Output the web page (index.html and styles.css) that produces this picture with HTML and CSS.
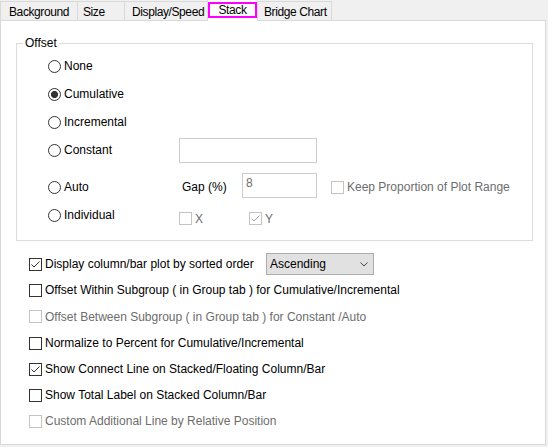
FILE: index.html
```html
<!DOCTYPE html>
<html>
<head>
<meta charset="utf-8">
<link rel="stylesheet" href="styles.css">
</head>
<body>
<div class="tabs">
  <div class="tab t-bg">Background</div>
  <div class="tab t-size">Size</div>
  <div class="tab t-disp">Display/Speed</div>
  <div class="tab active"><span class="hl">Stack</span></div>
  <div class="tab t-bridge">Bridge Chart</div>
</div>
<div class="panel">
  <div class="group">
    <span class="legend">Offset</span>
    <div class="row"><label class="opt"><span class="radio"></span>None</label></div>
    <div class="row"><label class="opt"><span class="radio on"></span>Cumulative</label></div>
    <div class="row"><label class="opt"><span class="radio"></span>Incremental</label></div>
    <div class="row"><label class="opt"><span class="radio"></span>Constant</label><div class="textbox wide"></div></div>
    <div class="row spaced">
      <label class="opt"><span class="radio"></span>Auto</label>
      <span class="gaplbl">Gap (%)</span>
      <div class="textbox narrow">8</div>
      <label class="copt keep"><span class="cb dis"></span><span class="dtext">Keep Proportion of Plot Range</span></label>
    </div>
    <div class="row">
      <label class="opt"><span class="radio"></span>Individual</label>
      <label class="copt axis axx"><span class="cb dis"></span><span class="dtext">X</span></label>
      <label class="copt axis"><span class="cb dis"><svg width="11" height="11" viewBox="0 0 11 11"><polyline points="1.5,5.5 4,8 9.5,2.5" fill="none" stroke="#a8a8a8" stroke-width="1"/></svg></span><span class="dtext">Y</span></label>
    </div>
  </div>
  <div class="checks">
    <div class="crow">
      <span class="cb"><svg width="11" height="11" viewBox="0 0 11 11"><polyline points="1.5,5.5 4,8 9.5,2.5" fill="none" stroke="#333" stroke-width="1"/></svg></span>
      <span class="sortlbl">Display column/bar plot by sorted order</span>
      <div class="select"><span>Ascending</span><svg width="8" height="5" viewBox="0 0 8 5"><polyline points="0.5,0.5 4,4 7.5,0.5" fill="none" stroke="#444" stroke-width="1"/></svg></div>
    </div>
    <div class="crow"><span class="cb"></span>Offset Within Subgroup ( in Group tab ) for Cumulative/Incremental</div>
    <div class="crow tall"><span class="cb dis"></span><span class="dtext">Offset Between Subgroup ( in Group tab ) for Constant /Auto</span></div>
    <div class="crow"><span class="cb"></span>Normalize to Percent for Cumulative/Incremental</div>
    <div class="crow">
      <span class="cb"><svg width="11" height="11" viewBox="0 0 11 11"><polyline points="1.5,5.5 4,8 9.5,2.5" fill="none" stroke="#333" stroke-width="1"/></svg></span>
      Show Connect Line on Stacked/Floating Column/Bar
    </div>
    <div class="crow"><span class="cb"></span>Show Total Label on Stacked Column/Bar</div>
    <div class="crow"><span class="cb dis"></span><span class="dtext">Custom Additional Line by Relative Position</span></div>
  </div>
</div>
</body>
</html>
```

FILE: styles.css
```css
html, body {
  margin: 0;
  padding: 0;
}
body {
  width: 548px;
  height: 447px;
  overflow: hidden;
  background: #f0f0f0;
  font-family: "Liberation Sans", Arial, sans-serif;
  font-size: 12px;
  line-height: 16px;
  color: #000;
}

/* tab strip */
.tabs {
  display: flex;
  height: 20px;
  align-items: flex-start;
}
.tab {
  box-sizing: border-box;
  height: 19px;
  margin-top: 1px;
  padding-top: 2px;
  border-top: 1px solid #d9d9d9;
  border-left: 1px solid #d9d9d9;
  background: #f0f0f0;
  white-space: nowrap;
  letter-spacing: -0.4px;
  overflow: hidden;
}
.t-bg { width: 77px; padding-left: 8px; }
.t-size { width: 47px; padding-left: 5px; }
.t-disp { width: 83px; padding-left: 7px; }
.t-bridge { width: 75px; padding-left: 6px; border-right: 1px solid #d9d9d9; }
.tab.active {
  position: relative;
  z-index: 1;
  width: 50px;
  height: 21px;
  margin-top: 0;
  padding-top: 2px;
  border-top: none;
  background: #fff;
}
.hl {
  display: block;
  box-sizing: border-box;
  width: 49px;
  height: 16px;
  border: 2px solid #ff00ff;
  line-height: 12px;
  text-align: center;
}

/* panel */
.panel {
  box-sizing: border-box;
  width: 546px;
  height: 425px;
  border: 1px solid #d9d9d9;
  background: #fff;
}

.group {
  position: relative;
  box-sizing: border-box;
  width: 517px;
  height: 198px;
  margin: 22px 0 0 15px;
  padding: 8px 0 0 31px;
  border: 1px solid #dcdcdc;
}
.legend {
  position: absolute;
  top: -9px;
  left: 6px;
  padding: 0 2px;
  background: #fff;
}

.row {
  display: flex;
  align-items: center;
  height: 28px;
}
.row.spaced { margin-top: 9px; }

.opt {
  display: flex;
  align-items: center;
  width: 131px;
  flex: none;
}
.radio {
  box-sizing: border-box;
  width: 13px;
  height: 13px;
  flex: none;
  margin-right: 3px;
  border: 1px solid #333;
  border-radius: 50%;
  background: #fff;
}
.radio.on {
  background: radial-gradient(circle, #333 0, #333 3.2px, #fff 3.9px);
}

.textbox {
  box-sizing: border-box;
  height: 25px;
  border: 1px solid #cccccc;
  background: #fff;
  padding: 1px 3px 0;
  color: #6d6d6d;
}
.textbox.wide { width: 138px; }
.textbox.narrow { width: 75px; margin-bottom: 3px; }

.gaplbl {
  width: 63px;
  padding-left: 3px;
  box-sizing: border-box;
}

.copt {
  display: flex;
  align-items: center;
}
.keep { margin-left: 14px; }
.axis { margin-top: 7px; }
.axx { width: 70px; }

.cb {
  box-sizing: border-box;
  display: flex;
  align-items: center;
  justify-content: center;
  width: 13px;
  height: 13px;
  flex: none;
  margin-right: 3px;
  border: 1px solid #333;
  background: #fff;
}
.cb.dis { border-color: #c4c4c4; }
.dtext { color: #6d6d6d; }

/* lower checkboxes */
.checks {
  margin-top: 10px;
  padding-left: 28px;
}
.crow {
  display: flex;
  align-items: center;
  height: 26px;
  white-space: nowrap;
}
.crow.tall { height: 27px; }
.sortlbl {
  width: 221px;
  flex: none;
}
.select {
  box-sizing: border-box;
  display: flex;
  align-items: center;
  justify-content: space-between;
  width: 108px;
  height: 22px;
  padding: 0 5px 0 3px;
  border: 1px solid #adadad;
  background: #e1e1e1;
}
```
